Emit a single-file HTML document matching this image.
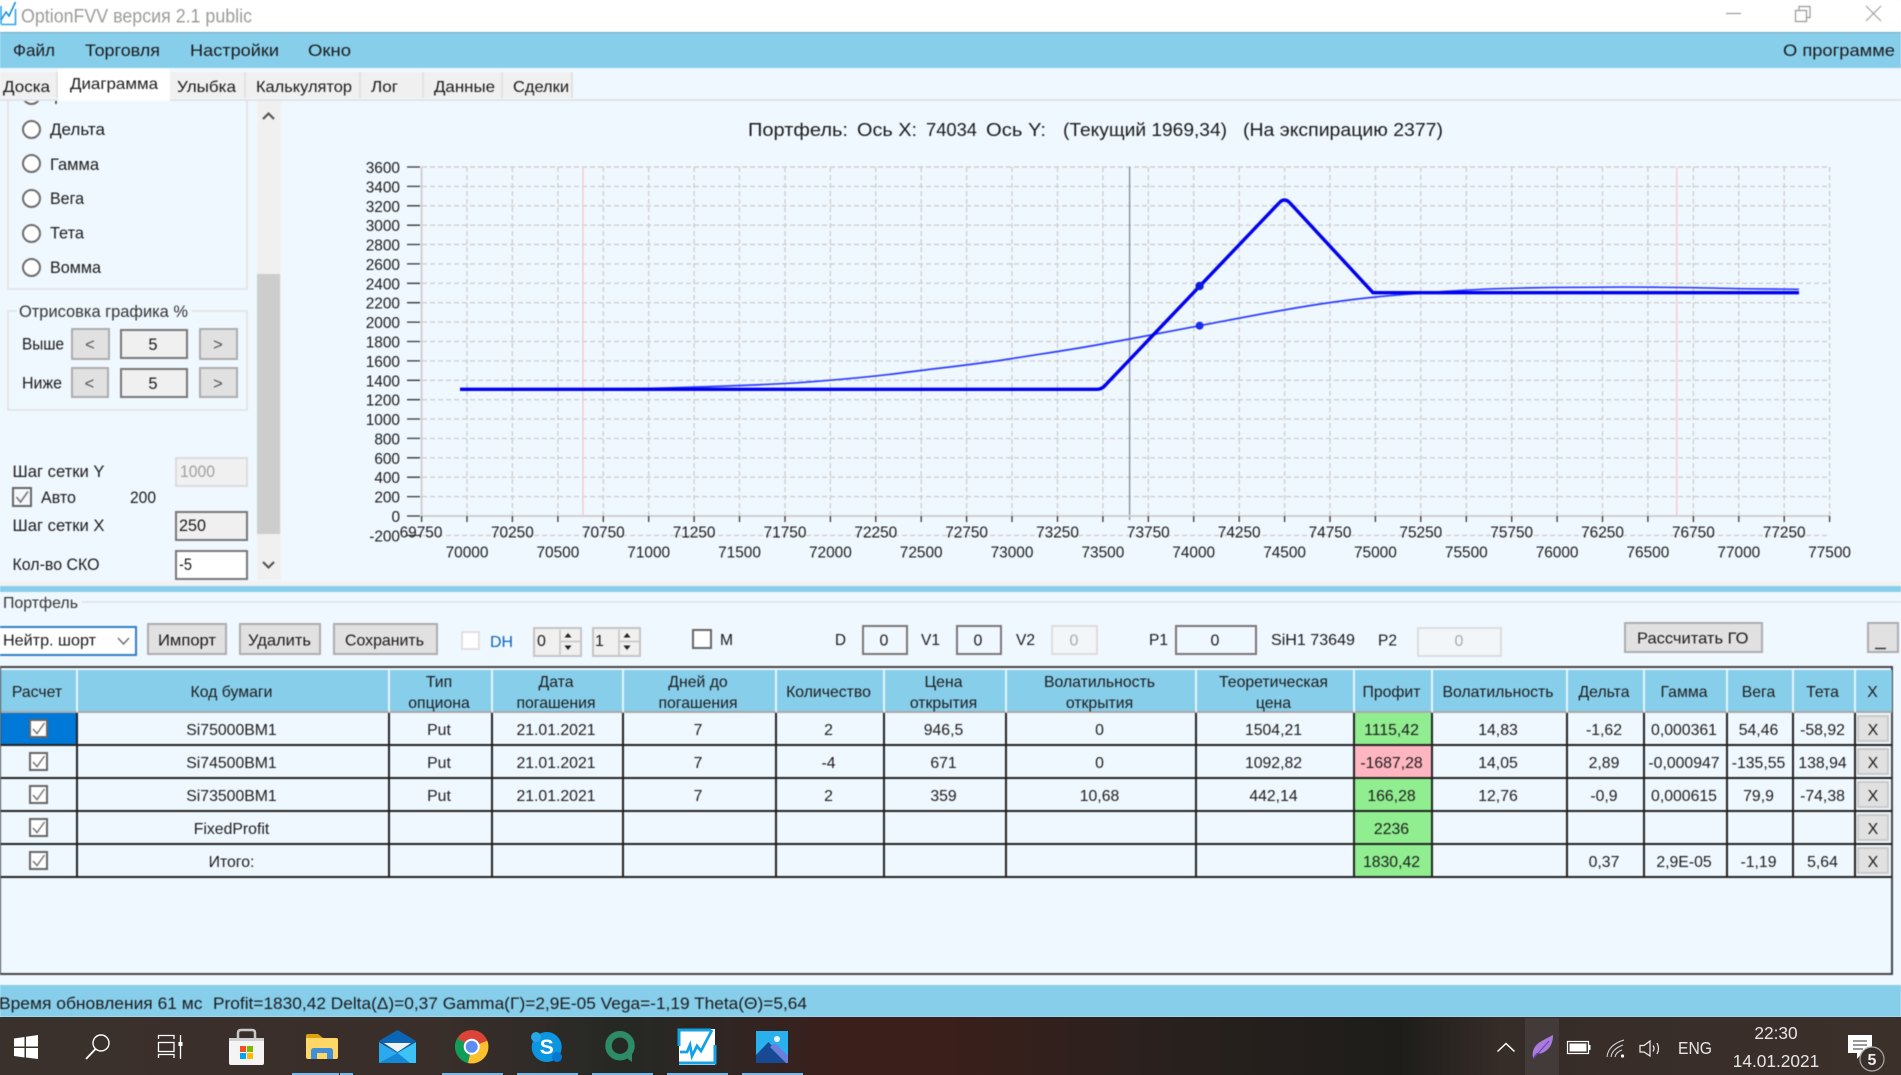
<!DOCTYPE html>
<html lang="ru"><head><meta charset="utf-8"><title>OptionFVV</title>
<style>
html,body{margin:0;padding:0;width:1901px;height:1075px;overflow:hidden;background:#f0f8ff}
*{box-sizing:border-box}
#app{position:absolute;left:0;top:0;width:1901px;height:1017px;overflow:hidden;background:#f0f8ff;font-family:"Liberation Sans","Noto Sans CJK SC",sans-serif;color:#1a1a1a;filter:blur(.45px)}
.a{position:absolute}
.btn{position:absolute;background:#e1e1e1;border:2px solid #adadad}
.inp{position:absolute;background:#f0f0f0;border:2px solid #777}
.w{background:#fff}
.dis{border-color:#dcdcdc;background:#f3f6f9}
.tab{position:absolute;top:72px;height:26px;background:#f0f0f0;border-right:2px solid #e2e2e2}
.grp{position:absolute;border:2px solid #e3e6e9}
.rad{position:absolute;left:22px;width:19px;height:19px;border-radius:50%;background:#fff;border:2px solid #6c6c6c}
#tb{position:absolute;left:0;top:666px;width:1893px;height:309px;border:2px solid #444;border-left-width:1px;background:#f0f8ff}
table{position:absolute;left:0;top:2px;border-collapse:separate;border-spacing:0;table-layout:fixed;width:1891px;font-size:15.8px;text-align:center;color:#1c1c1c}
th{font-weight:normal;background:#87ceeb;height:43px;padding:0 3px 0 0;line-height:20.5px;border-right:2px solid #e6f4fb;border-bottom:2px solid #a9a9a9;font-size:15.8px}
th span{display:block;position:relative;top:3px}
td{height:33px;padding:4px 3px 0 0;border-right:2px solid #222;border-bottom:2px solid #222;white-space:nowrap}
th:last-child{border-right:0}
td:last-child{border-right:0;padding-right:0}
.g{background:#90ee90}.p{background:#ffb6c1}.s{background:#0078d7}
.cb{display:block;position:relative;top:-2px;left:1px;width:19px;height:19px;margin:0 auto;background:#fff;border:2px solid #666}
.cb svg{display:block}
.x{display:block;position:relative;top:-2px;margin:0 3px 0 1px;height:27px;line-height:27px;background:#e1e1e1;border:2px solid #c9c9c9;font-size:16px}
svg text{font-family:"Liberation Sans","Noto Sans CJK SC",sans-serif;fill:#1a1a1a}
#bar{position:absolute;left:0;top:1017px;width:1901px;height:58px;background:linear-gradient(90deg,#3a302c 0,#3a2e2a 420px,#322c28 520px,#252824 620px,#2f2623 720px,#3b1f1b 840px,#3a1f1b 950px,#2a211e 1150px,#1e1d1a 1400px,#362c28 1500px,#3c302b 1901px)}
</style></head><body>
<div id="app">
<!-- title bar -->
<div class="a" style="left:0;top:0;width:1901px;height:32px;background:#fff"></div>
<!-- menu -->
<div class="a" style="left:0;top:32px;width:1901px;height:36px;background:#87ceeb;border-top:1px solid #74a9bf"></div>
<!-- left panel boxes -->
<div class="grp" style="left:7px;top:90px;width:241px;height:200px"></div>
<div class="a" style="left:22px;top:86px;width:19px;height:19px;border-radius:50%;background:#fff;border:2px solid #6c6c6c"></div>
<div class="rad" style="top:120px"></div><div class="rad" style="top:154px"></div><div class="rad" style="top:189px"></div><div class="rad" style="top:224px"></div><div class="rad" style="top:258px"></div>
<div class="a" style="left:257px;top:100px;width:24px;height:480px;background:#f0f0f0"></div>
<div class="a" style="left:257px;top:274px;width:23px;height:260px;background:#cdcdcd"></div>
<div class="grp" style="left:7px;top:310px;width:241px;height:101px"></div>
<div class="a" style="left:17px;top:305px;width:175px;height:12px;background:#f0f8ff"></div>
<div class="btn" style="left:71px;top:328px;width:39px;height:32px"></div>
<div class="inp" style="left:120px;top:329px;width:68px;height:30px"></div>
<div class="btn" style="left:199px;top:328px;width:39px;height:32px"></div>
<div class="btn" style="left:71px;top:367px;width:38px;height:31px"></div>
<div class="inp" style="left:120px;top:368px;width:68px;height:30px"></div>
<div class="btn" style="left:199px;top:367px;width:39px;height:31px"></div>
<div class="inp dis" style="left:175px;top:457px;width:73px;height:30px;background:#f0f0f0"></div>
<div class="a" style="left:12px;top:487px;width:20px;height:20px;background:#f5f8fb;border:2px solid #666"><svg width="16" height="16" style="display:block"><path d="M2.5 8 L6.5 13 L14 2.5" fill="none" stroke="#777" stroke-width="1.6"/></svg></div>
<div class="inp" style="left:175px;top:511px;width:73px;height:30px"></div>
<div class="inp w" style="left:175px;top:550px;width:73px;height:30px"></div>
<!-- tabs -->
<div class="a" style="left:0;top:68px;width:1901px;height:33px;background:#f0f8ff;border-bottom:2px solid #e0e3e6"></div>
<div class="tab" style="left:0;width:58px"></div>
<div class="a" style="left:58px;top:69px;width:112px;height:32px;background:#fff"></div>
<div class="tab" style="left:170px;width:76px"></div>
<div class="tab" style="left:246px;width:115px"></div>
<div class="tab" style="left:361px;width:63px"></div>
<div class="tab" style="left:424px;width:79px"></div>
<div class="tab" style="left:503px;width:70px"></div>
<!-- splitter -->
<div class="a" style="left:0;top:581px;width:1901px;height:5px;background:#f2f2f2"></div>
<div class="a" style="left:0;top:586px;width:1901px;height:6px;background:#87ceeb"></div>
<!-- portfolio -->
<div class="a" style="left:82px;top:601px;width:1819px;height:2px;background:#e3e6e9"></div>
<div class="a" style="left:0;top:626px;width:137px;height:30px;background:#fff;border:2px solid #2f7fc4;border-left:0"></div>
<div class="btn" style="left:147px;top:623px;width:80px;height:32px"></div>
<div class="btn" style="left:239px;top:623px;width:82px;height:32px"></div>
<div class="btn" style="left:333px;top:623px;width:105px;height:32px"></div>
<div class="a" style="left:461px;top:631px;width:19px;height:19px;background:#fff;border:2px solid #e0e0e0"></div>
<div class="inp" style="left:533px;top:627px;width:49px;height:30px;border-color:#c4c4c4"></div>
<div class="inp" style="left:592px;top:627px;width:49px;height:30px;border-color:#c4c4c4"></div>
<div class="a" style="left:692px;top:629px;width:20px;height:20px;background:#fff;border:2px solid #666"></div>
<div class="inp" style="left:862px;top:625px;width:46px;height:30px;background:#f0f8ff;border-color:#777"></div>
<div class="inp" style="left:956px;top:625px;width:46px;height:30px;background:#f0f8ff;border-color:#777"></div>
<div class="inp dis" style="left:1051px;top:625px;width:47px;height:30px"></div>
<div class="inp" style="left:1175px;top:625px;width:82px;height:30px;background:#f0f8ff;border-color:#777"></div>
<div class="inp dis" style="left:1417px;top:627px;width:85px;height:30px"></div>
<div class="btn" style="left:1624px;top:622px;width:139px;height:31px"></div>
<div class="btn" style="left:1867px;top:622px;width:32px;height:31px"></div>
<!-- table -->
<div id="tb">
<table>
<colgroup><col style="width:77px"><col style="width:312px"><col style="width:103px"><col style="width:131px"><col style="width:153px"><col style="width:108px"><col style="width:122px"><col style="width:190px"><col style="width:158px"><col style="width:78px"><col style="width:135px"><col style="width:77px"><col style="width:83px"><col style="width:66px"><col style="width:62px"><col style="width:36px"></colgroup>
<tr><th><span>Расчет</span></th><th><span>Код бумаги</span></th><th><span>Тип<br>опциона</span></th><th><span>Дата<br>погашения</span></th><th><span>Дней до<br>погашения</span></th><th><span>Количество</span></th><th><span>Цена<br>открытия</span></th><th><span>Волатильность<br>открытия</span></th><th><span>Теоретическая<br>цена</span></th><th><span>Профит</span></th><th><span>Волатильность</span></th><th><span>Дельта</span></th><th><span>Гамма</span></th><th><span>Вега</span></th><th><span>Тета</span></th><th><span>X</span></th></tr>
<tr><td class="s"><span class="cb"><svg width="15" height="15"><path d="M2 8 L6 12.5 L13.5 2" fill="none" stroke="#777" stroke-width="1.5"/></svg></span></td><td>Si75000BM1</td><td>Put</td><td>21.01.2021</td><td>7</td><td>2</td><td>946,5</td><td>0</td><td>1504,21</td><td class="g">1115,42</td><td>14,83</td><td>-1,62</td><td>0,000361</td><td>54,46</td><td>-58,92</td><td><span class="x">X</span></td></tr>
<tr><td><span class="cb"><svg width="15" height="15"><path d="M2 8 L6 12.5 L13.5 2" fill="none" stroke="#777" stroke-width="1.5"/></svg></span></td><td>Si74500BM1</td><td>Put</td><td>21.01.2021</td><td>7</td><td>-4</td><td>671</td><td>0</td><td>1092,82</td><td class="p">-1687,28</td><td>14,05</td><td>2,89</td><td>-0,000947</td><td>-135,55</td><td>138,94</td><td><span class="x">X</span></td></tr>
<tr><td><span class="cb"><svg width="15" height="15"><path d="M2 8 L6 12.5 L13.5 2" fill="none" stroke="#777" stroke-width="1.5"/></svg></span></td><td>Si73500BM1</td><td>Put</td><td>21.01.2021</td><td>7</td><td>2</td><td>359</td><td>10,68</td><td>442,14</td><td class="g">166,28</td><td>12,76</td><td>-0,9</td><td>0,000615</td><td>79,9</td><td>-74,38</td><td><span class="x">X</span></td></tr>
<tr><td><span class="cb"><svg width="15" height="15"><path d="M2 8 L6 12.5 L13.5 2" fill="none" stroke="#777" stroke-width="1.5"/></svg></span></td><td>FixedProfit</td><td></td><td></td><td></td><td></td><td></td><td></td><td></td><td class="g">2236</td><td></td><td></td><td></td><td></td><td></td><td><span class="x">X</span></td></tr>
<tr><td><span class="cb"><svg width="15" height="15"><path d="M2 8 L6 12.5 L13.5 2" fill="none" stroke="#777" stroke-width="1.5"/></svg></span></td><td>Итого:</td><td></td><td></td><td></td><td></td><td></td><td></td><td></td><td class="g">1830,42</td><td></td><td>0,37</td><td>2,9E-05</td><td>-1,19</td><td>5,64</td><td><span class="x">X</span></td></tr>
</table>
</div>
<!-- status -->
<div class="a" style="left:0;top:985px;width:1901px;height:32px;background:#87ceeb"></div>

<!-- overlay -->
<svg class="a" style="left:0;top:0" width="1901" height="1017" viewBox="0 0 1901 1017">
<!-- window controls -->
<path d="M1726 13.5H1741" stroke="#999" stroke-width="1.2"/>
<path d="M1795.5 10.5h11v11h-11zM1799 10V6.5h11v11h-3.5" fill="none" stroke="#999" stroke-width="1.2"/>
<path d="M1866 6L1881 21M1881 6L1866 21" stroke="#999" stroke-width="1"/>
<!-- app icon -->
<path d="M1 24.5H15.5V9M1 24V6" fill="none" stroke="#2ea3e3" stroke-width="1.6"/>
<path d="M1 20L6 12L9 16L15.5 2" fill="none" stroke="#1b8fd8" stroke-width="1.6"/>
<text x="21" y="22.5" font-size="19" textLength="231" lengthAdjust="spacingAndGlyphs" style="fill:#9b9b9b">OptionFVV версия 2.1 public</text>
<!-- menu -->
<g font-size="17">
<text x="13" y="56" textLength="42" lengthAdjust="spacingAndGlyphs">Файл</text>
<text x="85" y="56" textLength="75" lengthAdjust="spacingAndGlyphs">Торговля</text>
<text x="190" y="56" textLength="89" lengthAdjust="spacingAndGlyphs">Настройки</text>
<text x="308" y="56" textLength="43" lengthAdjust="spacingAndGlyphs">Окно</text>
<text x="1783" y="56" textLength="112" lengthAdjust="spacingAndGlyphs">О программе</text>
</g>
<!-- tabs -->
<g font-size="16">
<text x="3" y="92" textLength="47" lengthAdjust="spacingAndGlyphs">Доска</text>
<text x="70" y="89" textLength="88" lengthAdjust="spacingAndGlyphs">Диаграмма</text>
<text x="177" y="92" textLength="59" lengthAdjust="spacingAndGlyphs">Улыбка</text>
<text x="256" y="92" textLength="96" lengthAdjust="spacingAndGlyphs">Калькулятор</text>
<text x="371" y="92" textLength="27" lengthAdjust="spacingAndGlyphs">Лог</text>
<text x="434" y="92" textLength="61" lengthAdjust="spacingAndGlyphs">Данные</text>
<text x="513" y="92" textLength="56" lengthAdjust="spacingAndGlyphs">Сделки</text>
</g>
<!-- left labels -->
<path d="M56 101v3" stroke="#333" stroke-width="1.5"/>
<g font-size="16.5">
<text x="50" y="135" textLength="55" lengthAdjust="spacingAndGlyphs">Дельта</text>
<text x="50" y="170" textLength="49" lengthAdjust="spacingAndGlyphs">Гамма</text>
<text x="50" y="204" textLength="34" lengthAdjust="spacingAndGlyphs">Вега</text>
<text x="50" y="238.500" textLength="34" lengthAdjust="spacingAndGlyphs">Тета</text>
<text x="50" y="273" textLength="51" lengthAdjust="spacingAndGlyphs">Вомма</text>
<text x="19" y="317" textLength="169" lengthAdjust="spacingAndGlyphs" style="fill:#333">Отрисовка графика %</text>
<text x="22" y="349.500" textLength="42" lengthAdjust="spacingAndGlyphs">Выше</text>
<text x="22" y="388.500" textLength="40" lengthAdjust="spacingAndGlyphs">Ниже</text>
<text x="12.5" y="477" textLength="92" lengthAdjust="spacingAndGlyphs">Шаг сетки Y</text>
<text x="41" y="503" textLength="35" lengthAdjust="spacingAndGlyphs">Авто</text>
<text x="130" y="503" textLength="26" lengthAdjust="spacingAndGlyphs">200</text>
<text x="12.5" y="531" textLength="92" lengthAdjust="spacingAndGlyphs">Шаг сетки X</text>
<text x="12.5" y="570" textLength="87" lengthAdjust="spacingAndGlyphs">Кол-во СКО</text>
<text x="180" y="477" textLength="35" lengthAdjust="spacingAndGlyphs" style="fill:#a0a0a0">1000</text>
<text x="179" y="531" textLength="27" lengthAdjust="spacingAndGlyphs">250</text>
<text x="179" y="570" textLength="13" lengthAdjust="spacingAndGlyphs">-5</text>
<text x="90" y="350" text-anchor="middle" style="fill:#555">&lt;</text>
<text x="218" y="350" text-anchor="middle" style="fill:#555">&gt;</text>
<text x="89.500" y="389" text-anchor="middle" style="fill:#555">&lt;</text>
<text x="218" y="389" text-anchor="middle" style="fill:#555">&gt;</text>
<text x="153" y="350" text-anchor="middle">5</text>
<text x="153" y="389" text-anchor="middle">5</text>
</g>
<path d="M263 119L268.500 113.500L274 119M263 562L268.500 567.500L274 562" fill="none" stroke="#555" stroke-width="2.200"/>
<!-- portfolio labels -->
<g font-size="16">
<text x="3" y="608" textLength="75" lengthAdjust="spacingAndGlyphs" style="fill:#333">Портфель</text>
<text x="3" y="645.500" textLength="93" lengthAdjust="spacingAndGlyphs">Нейтр. шорт</text>
<text x="158" y="645.500" textLength="58" lengthAdjust="spacingAndGlyphs">Импорт</text>
<text x="248" y="645.500" textLength="63" lengthAdjust="spacingAndGlyphs">Удалить</text>
<text x="345" y="645.500" textLength="79" lengthAdjust="spacingAndGlyphs">Сохранить</text>
<text x="490" y="647" textLength="23" lengthAdjust="spacingAndGlyphs" style="fill:#0a64b8">DH</text>
<text x="537" y="646">0</text>
<text x="595" y="646">1</text>
<text x="720" y="645" textLength="13" lengthAdjust="spacingAndGlyphs">M</text>
<text x="835" y="645" textLength="11" lengthAdjust="spacingAndGlyphs">D</text>
<text x="884" y="645.500" text-anchor="middle">0</text>
<text x="921" y="645" textLength="19" lengthAdjust="spacingAndGlyphs">V1</text>
<text x="978" y="645.500" text-anchor="middle">0</text>
<text x="1016" y="645" textLength="19" lengthAdjust="spacingAndGlyphs">V2</text>
<text x="1074" y="645.500" text-anchor="middle" style="fill:#aaa">0</text>
<text x="1149" y="645" textLength="19" lengthAdjust="spacingAndGlyphs">P1</text>
<text x="1215" y="645.500" text-anchor="middle">0</text>
<text x="1271" y="645" textLength="84" lengthAdjust="spacingAndGlyphs">SiH1 73649</text>
<text x="1378" y="645.500" textLength="19" lengthAdjust="spacingAndGlyphs">P2</text>
<text x="1459" y="646" text-anchor="middle" style="fill:#aaa">0</text>
<text x="1637" y="643.500" textLength="111.500" lengthAdjust="spacingAndGlyphs">Рассчитать ГО</text>
</g>
<path d="M1875 648.500h11" stroke="#333" stroke-width="1.500"/>
<path d="M118 638L123.500 644L129 638" fill="none" stroke="#666" stroke-width="1.300"/>
<!-- spinner arrows -->
<path d="M560 629.500V655M560 641.500H580M619 629.500V655M619 641.500H639" stroke="#c4c4c4" stroke-width="1.500" fill="none"/>
<path d="M564.500 637.500L568 633L571.500 637.500ZM564.500 645.500L568 650L571.500 645.500ZM623.500 637.500L627 633L630.500 637.500ZM623.500 645.500L627 650L630.500 645.500Z" fill="#222"/>

<!-- chart -->
<g font-size="18.500" style="fill:#222">
<text x="748" y="136" textLength="100" lengthAdjust="spacingAndGlyphs">Портфель:</text>
<text x="857" y="136" textLength="60" lengthAdjust="spacingAndGlyphs">Ось X:</text>
<text x="926" y="136" textLength="51" lengthAdjust="spacingAndGlyphs">74034</text>
<text x="986" y="136" textLength="60" lengthAdjust="spacingAndGlyphs">Ось Y:</text>
<text x="1063" y="136" textLength="164" lengthAdjust="spacingAndGlyphs">(Текущий 1969,34)</text>
<text x="1243" y="136" textLength="200" lengthAdjust="spacingAndGlyphs">(На экспирацию 2377)</text>
</g>
<!-- horizontal grid -->
<path d="M422 167H1830M422 186.400H1830M422 205.800H1830M422 225.200H1830M422 244.500H1830M422 263.900H1830M422 283.300H1830M422 302.700H1830M422 322.100H1830M422 341.500H1830M422 360.900H1830M422 380.300H1830M422 399.700H1830M422 419H1830M422 438.400H1830M422 457.800H1830M422 477.200H1830M422 496.600H1830M422 535.400H1830" stroke="#cfcfcf" stroke-width="1.400" stroke-dasharray="5 3" fill="none"/>
<!-- vertical grid -->
<path d="M467 167V516M512.400 167V516M557.900 167V516M603.300 167V516M648.700 167V516M694.100 167V516M739.500 167V516M785 167V516M830.400 167V516M875.800 167V516M921.200 167V516M966.600 167V516M1012 167V516M1057.500 167V516M1102.900 167V516M1148.300 167V516M1193.700 167V516M1239.200 167V516M1284.600 167V516M1330 167V516M1375.400 167V516M1420.800 167V516M1466.300 167V516M1511.700 167V516M1557.100 167V516M1602.500 167V516M1647.900 167V516M1693.400 167V516M1738.800 167V516M1784.200 167V516M1829.600 167V516" stroke="#cfcfcf" stroke-width="1.400" stroke-dasharray="5 3" fill="none"/>
<!-- pink & gray vertical -->
<path d="M583 167V516M1676.700 167V516" stroke="#f8c4cc" stroke-width="1.300"/>
<path d="M1129.600 167V520" stroke="#7d8a96" stroke-width="1.300"/>
<!-- axes -->
<path d="M421.600 167V516H1830" fill="none" stroke="#d0d0d0" stroke-width="2"/>
<!-- y ticks -->
<path d="M407 167H420M407 186.400H420M407 205.800H420M407 225.200H420M407 244.500H420M407 263.900H420M407 283.300H420M407 302.700H420M407 322.100H420M407 341.500H420M407 360.900H420M407 380.300H420M407 399.700H420M407 419H420M407 438.400H420M407 457.800H420M407 477.200H420M407 496.600H420M407 516H420M407 535.400H420" stroke="#333" stroke-width="1.300" fill="none"/>
<!-- x ticks -->
<path d="M421.600 516v6M467 516v6M512.400 516v6M557.900 516v6M603.300 516v6M648.700 516v6M694.100 516v6M739.500 516v6M785 516v6M830.400 516v6M875.800 516v6M921.200 516v6M966.600 516v6M1012 516v6M1057.500 516v6M1102.900 516v6M1148.300 516v6M1193.700 516v6M1239.200 516v6M1284.600 516v6M1330 516v6M1375.400 516v6M1420.800 516v6M1466.300 516v6M1511.700 516v6M1557.100 516v6M1602.500 516v6M1647.900 516v6M1693.400 516v6M1738.800 516v6M1784.200 516v6M1829.600 516v6" stroke="#333" stroke-width="1.300" fill="none"/>
<g font-size="15.400" text-anchor="end" style="fill:#222">
<text x="400" y="173">3600</text><text x="400" y="192.400">3400</text><text x="400" y="211.800">3200</text><text x="400" y="231.200">3000</text><text x="400" y="250.500">2800</text><text x="400" y="269.900">2600</text><text x="400" y="289.300">2400</text><text x="400" y="308.700">2200</text><text x="400" y="328.100">2000</text><text x="400" y="347.500">1800</text><text x="400" y="366.900">1600</text><text x="400" y="386.300">1400</text><text x="400" y="405.700">1200</text><text x="400" y="425">1000</text><text x="400" y="444.400">800</text><text x="400" y="463.800">600</text><text x="400" y="483.200">400</text><text x="400" y="502.600">200</text><text x="400" y="522">0</text><text x="400" y="541.400">-200</text>
</g>
<g font-size="15.400" text-anchor="middle">
<text x="421" y="537.500">69750</text><text x="512.400" y="537.500">70250</text><text x="603.300" y="537.500">70750</text><text x="694.100" y="537.500">71250</text><text x="785" y="537.500">71750</text><text x="875.800" y="537.500">72250</text><text x="966.600" y="537.500">72750</text><text x="1057.500" y="537.500">73250</text><text x="1148.300" y="537.500">73750</text><text x="1239.200" y="537.500">74250</text><text x="1330" y="537.500">74750</text><text x="1420.800" y="537.500">75250</text><text x="1511.700" y="537.500">75750</text><text x="1602.500" y="537.500">76250</text><text x="1693.400" y="537.500">76750</text><text x="1784.200" y="537.500">77250</text>
<text x="467" y="557.500">70000</text><text x="557.900" y="557.500">70500</text><text x="648.700" y="557.500">71000</text><text x="739.500" y="557.500">71500</text><text x="830.400" y="557.500">72000</text><text x="921.200" y="557.500">72500</text><text x="1012" y="557.500">73000</text><text x="1102.900" y="557.500">73500</text><text x="1193.700" y="557.500">74000</text><text x="1284.600" y="557.500">74500</text><text x="1375.400" y="557.500">75000</text><text x="1466.300" y="557.500">75500</text><text x="1557.100" y="557.500">76000</text><text x="1647.900" y="557.500">76500</text><text x="1738.800" y="557.500">77000</text><text x="1829.600" y="557.500">77500</text>
</g>
<!-- curves -->
<path d="M600 389 C640 388.700 670 388 697 387 C730 386 770 384.500 799 382.700 C835 380 870 377 901 373 C935 368.500 970 365 1003 360 C1040 354 1070 350 1102 344 C1135 338 1165 332.500 1199.600 325.700 C1230 320 1255 315 1284 310 C1315 304.500 1345 300 1376 297 C1395 295 1410 294 1427 292.700 C1450 291 1475 289.500 1498 288.700 C1530 287.700 1560 287.300 1585 287.300 C1610 287 1640 287 1662 287.300 C1690 287.600 1715 288 1738 288.700 C1760 289 1780 289.300 1799 289.300" fill="none" stroke="#2a3bff" stroke-width="1.700"/>
<path d="M460 389.300H1097Q1102 389.300 1105.500 385L1279 203Q1284.500 197 1290 203L1373 292.700H1799" fill="none" stroke="#0000ee" stroke-width="3.400" stroke-linejoin="round"/>
<circle cx="1199.600" cy="286" r="4.200" fill="#0a1ce0"/>
<circle cx="1199.600" cy="325.700" r="4" fill="#1a2cf0"/>
<!-- status -->
<g font-size="17" style="fill:#1c1c1c">
<text x="-1" y="1009" textLength="203.500" lengthAdjust="spacingAndGlyphs">Время обновления 61 мс</text>
<text x="213" y="1009" textLength="594" lengthAdjust="spacingAndGlyphs">Profit=1830,42 Delta(Δ)=0,37 Gamma(Γ)=2,9E-05 Vega=-1,19 Theta(Θ)=5,64</text>
</g>
</svg>
</div>

<!-- taskbar -->
<div id="bar">
<svg width="1901" height="58" viewBox="0 1017 1901 58" style="display:block">
<!-- indicators -->
<path d="M292 1074h47M340 1074h13M442 1074h61M517 1074h61M592 1074h61M667 1074h61M742 1074h61" stroke="#76b9ed" stroke-width="2"/>
<!-- windows -->
<path d="M14 1038.500L24.500 1037V1046.500H14ZM26 1036.800L38 1035V1046.500H26ZM14 1048H24.500V1057.500L14 1056ZM26 1048H38V1059L26 1057.500Z" fill="#fff"/>
<!-- search -->
<circle cx="101" cy="1043" r="8" fill="none" stroke="#fff" stroke-width="1.400"/>
<path d="M95.500 1049L86 1059" stroke="#fff" stroke-width="1.800"/>
<!-- task view -->
<path d="M158.500 1039V1035.500H174V1039M158.500 1058V1054.500H174V1058" fill="none" stroke="#fff" stroke-width="1.300"/>
<rect x="158.500" y="1042.500" width="15.500" height="9" fill="none" stroke="#fff" stroke-width="1.300"/>
<path d="M180.500 1035V1059" stroke="#fff" stroke-width="1.300"/>
<rect x="178.500" y="1042" width="4" height="4" fill="#fff"/>
<!-- store -->
<path d="M238 1039V1033Q238 1030 241 1030H252Q255 1030 255 1033V1039" fill="none" stroke="#c9c9c9" stroke-width="2.500"/>
<path d="M229 1038H264V1063Q264 1065 262 1065H231Q229 1065 229 1063Z" fill="#f4f4f4"/>
<rect x="229" y="1038" width="35" height="3" fill="#cfcfcf"/>
<rect x="240" y="1046" width="6" height="6" fill="#f25022"/><rect x="247" y="1046" width="6" height="6" fill="#7fba00"/><rect x="240" y="1053" width="6" height="6" fill="#00a4ef"/><rect x="247" y="1053" width="6" height="6" fill="#ffb900"/>
<!-- folder -->
<path d="M306 1036Q306 1034 308 1034H318L323 1038H306Z" fill="#dfa00e"/>
<path d="M306 1038H336Q338 1038 338 1040V1057Q338 1059 336 1059H308Q306 1059 306 1057Z" fill="#ffd767"/>
<path d="M311 1059V1051Q311 1048 314 1048H330Q333 1048 333 1051V1059H327V1053H317V1059Z" fill="#3f8fd9"/>
<!-- mail -->
<path d="M379 1041L397.500 1030L416 1041L397.500 1053Z" fill="#0c64b4"/>
<path d="M384 1043L411 1043L397.500 1052Z" fill="#eef3f7"/>
<path d="M379 1042L397.500 1053L416 1042V1063H379Z" fill="#2aa9ec"/>
<path d="M397.500 1053L416 1042V1063H410Z" fill="#3cc2f5"/>
<path d="M379 1063L397.500 1053L410 1063Z" fill="#1487d6"/>
<!-- chrome -->
<circle cx="471.700" cy="1046.700" r="16.700" fill="#db4437"/>
<path d="M471.700 1046.700L457.200 1038.300A16.700 16.700 0 0 0 463.400 1061.200Q465 1062.200 468 1063Z" fill="#0f9d58"/>
<path d="M471.700 1046.700L487.300 1040.700A16.700 16.700 0 0 1 468 1063Z" fill="#fbc02d"/>
<circle cx="471.700" cy="1046.700" r="8" fill="#fff"/>
<circle cx="471.700" cy="1046.700" r="6" fill="#5c8df0"/>
<!-- skype -->
<circle cx="546.700" cy="1047" r="15" fill="#0a96e0"/>
<circle cx="536" cy="1037" r="5" fill="#28a8ea"/><circle cx="557" cy="1057" r="5" fill="#0678d0"/>
<text x="546.700" y="1054" font-size="21" font-weight="bold" text-anchor="middle" style="fill:#fff">S</text>
<!-- Q -->
<circle cx="620" cy="1045.700" r="11.500" fill="none" stroke="#2e8b68" stroke-width="6.500"/>
<path d="M624 1056L632 1062V1053Z" fill="#2e8b68"/>
<!-- app chart -->
<rect x="679" y="1029" width="36" height="36" fill="#fff"/>
<path d="M679 1063H715V1045M679 1046V1030H711" fill="none" stroke="#14a2e4" stroke-width="3"/>
<path d="M680 1052H687L690 1045L692 1056L697 1046L701 1051L712 1030" fill="none" stroke="#14a2e4" stroke-width="2.800"/>
<!-- photos -->
<rect x="756" y="1031" width="32" height="32" fill="#2ab0ec"/>
<circle cx="777" cy="1039" r="3" fill="#eaf6fd"/>
<path d="M756 1055L768.500 1042L788 1063H756Z" fill="#174a93"/>
<path d="M770 1047L775 1043L788 1056V1063H786Z" fill="#6a7fdc"/>
<!-- tray -->
<rect x="1525" y="1018" width="34" height="57" fill="#423b39"/>
<path d="M1497.500 1051.500L1506 1043.500L1514.500 1051.500" fill="none" stroke="#fff" stroke-width="1.500"/>
<path d="M1533 1058Q1531 1048 1540 1042Q1547 1038 1553 1035Q1553 1045 1547 1050Q1541 1055 1537 1053Q1535 1055 1533 1058Z" fill="#a87bdc"/>
<path d="M1533 1059L1549 1041" stroke="#6c3fb0" stroke-width="1"/>
<rect x="1567.500" y="1041.500" width="21" height="12" fill="none" stroke="#fff" stroke-width="1.200"/>
<rect x="1569.500" y="1043.500" width="17" height="8" fill="#fff"/>
<rect x="1589" y="1045" width="1.500" height="5" fill="#fff"/>
<path d="M1607 1057Q1608 1045 1624 1040M1611 1057Q1612 1049 1623 1045M1615 1057Q1616 1052 1622 1050" fill="none" stroke="#ddd" stroke-width="1"/>
<circle cx="1622.500" cy="1056" r="1.600" fill="#fff"/>
<path d="M1640 1045.500H1644L1650 1041V1056L1644 1052H1640Z" fill="none" stroke="#eee" stroke-width="1.200"/>
<path d="M1653 1045.500Q1655 1048.500 1653 1051.500M1657 1043Q1660 1048.500 1657 1054" fill="none" stroke="#eee" stroke-width="1.200"/>
<g style="font-size:17.300px">
<text x="1678" y="1054" textLength="34" lengthAdjust="spacingAndGlyphs" style="fill:#e6e6e6">ENG</text>
<text x="1776" y="1039" text-anchor="middle" style="fill:#e6e6e6">22:30</text>
<text x="1776" y="1067" text-anchor="middle" style="fill:#e6e6e6">14.01.2021</text>
</g>
<path d="M1848 1035H1872V1053H1862L1857 1059V1053H1848Z" fill="#fff"/>
<path d="M1853 1041H1867M1853 1045H1867M1853 1049H1863" stroke="#333" stroke-width="1"/>
<circle cx="1872" cy="1059" r="12" fill="#3a302b" stroke="#aaa" stroke-width="1.200"/>
<text x="1872" y="1065" font-size="16" font-weight="bold" text-anchor="middle" style="fill:#eee">5</text>
</svg>
</div>
</body></html>
